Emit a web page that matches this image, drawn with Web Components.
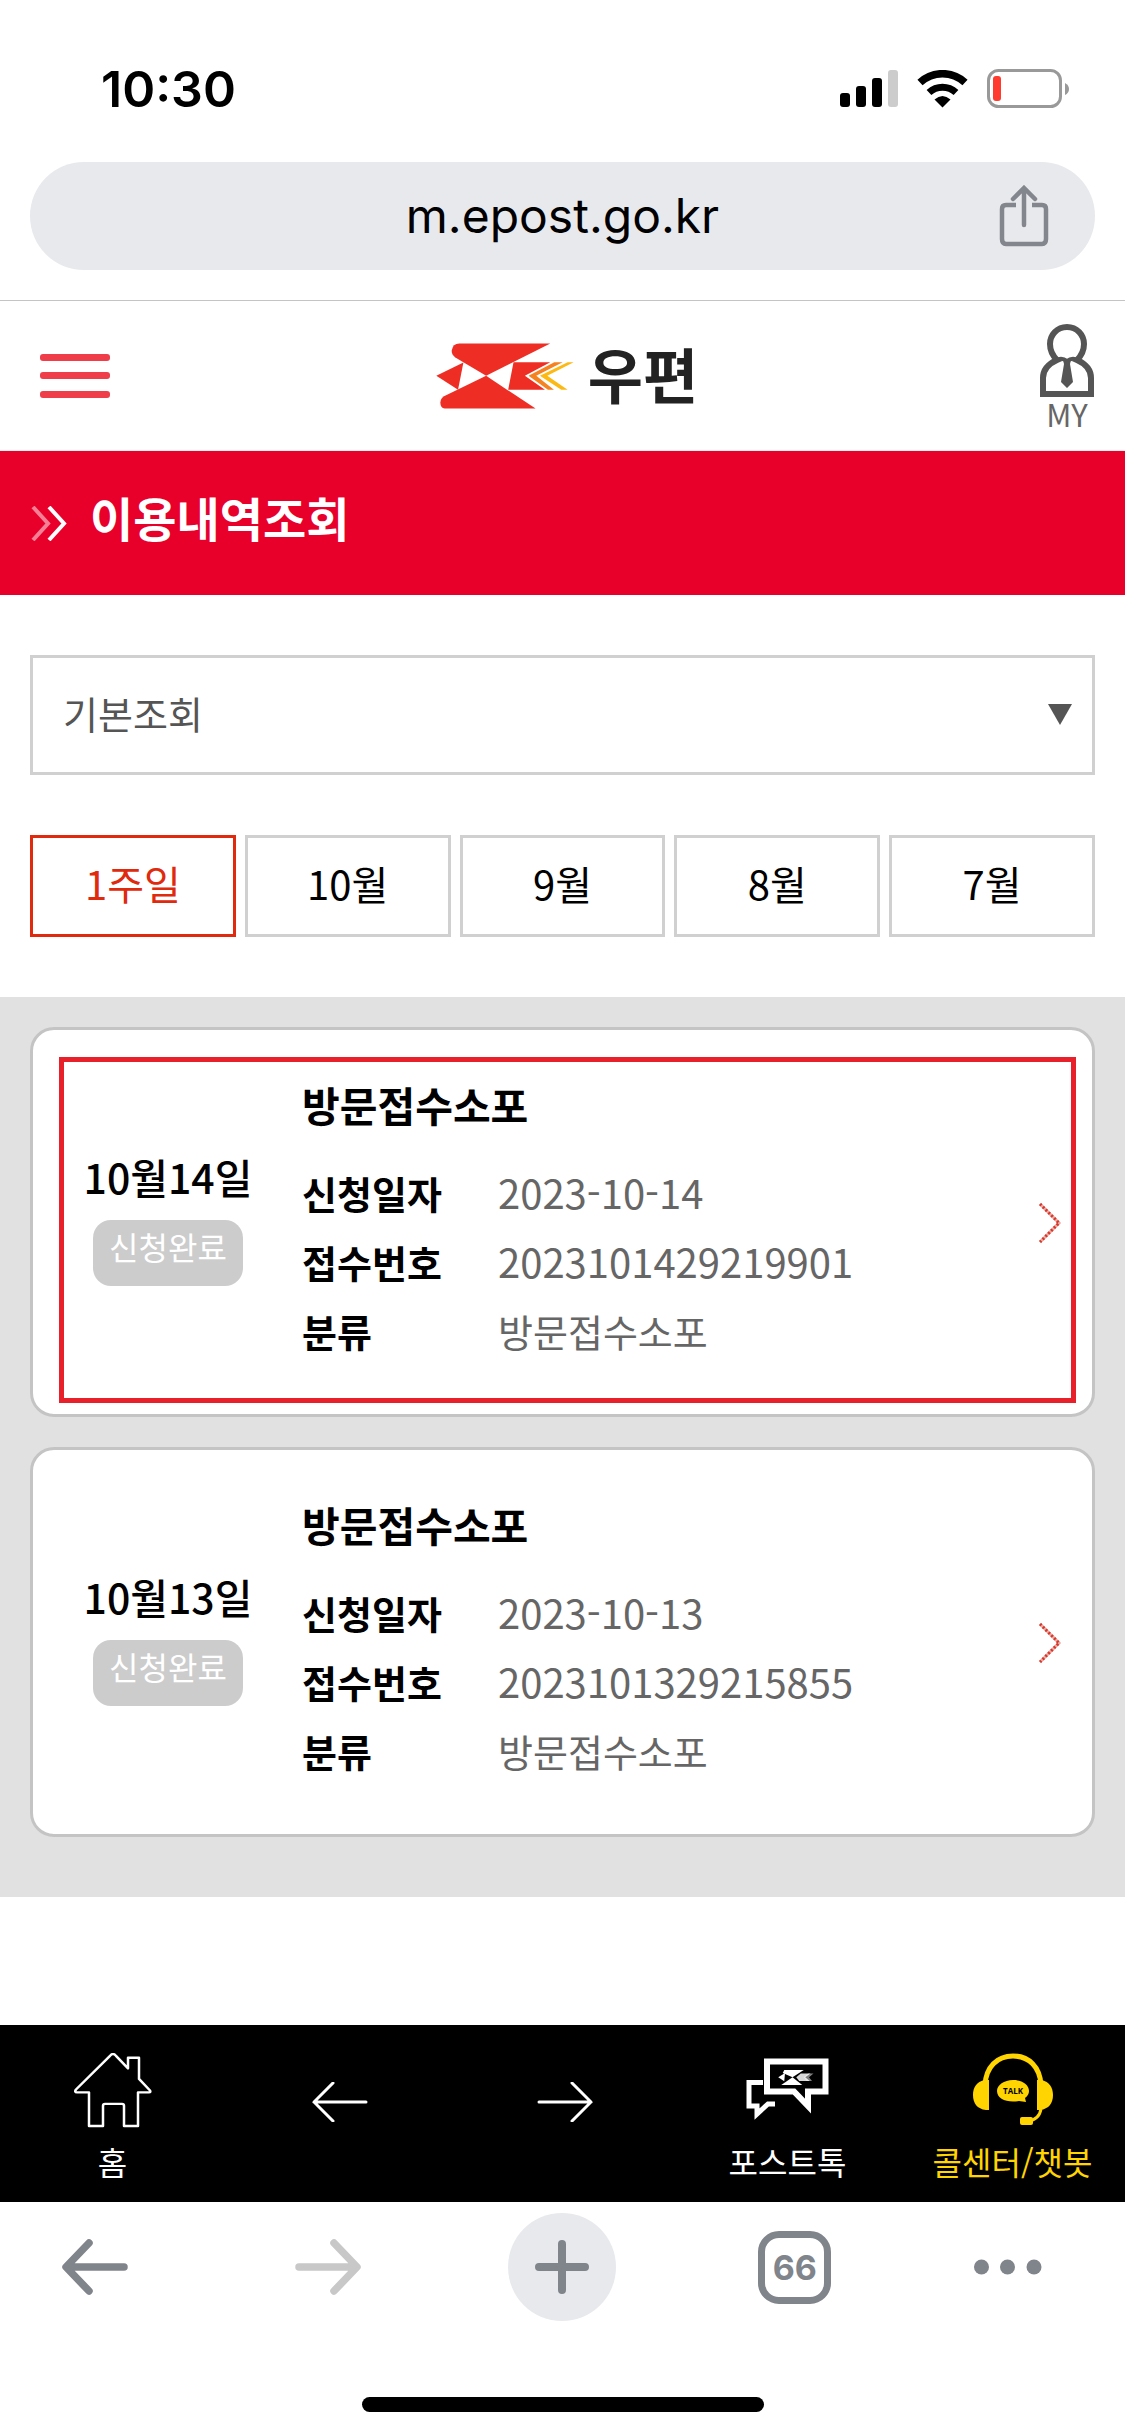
<!DOCTYPE html>
<html lang="ko">
<head>
<meta charset="utf-8">
<meta name="viewport" content="width=device-width, initial-scale=1">
<title>이용내역조회</title>
<style>
  html, body { margin: 0; background: #fff; }
  body { font-family: "Noto Sans CJK KR", "Noto Sans", sans-serif; color: #000; }
</style>
</head>
<body>
<epost-app></epost-app>
<script>
const base = `
  *, *::before, *::after { box-sizing: border-box; }
  button, select { font: inherit; color: inherit; background: none; border: 0; padding: 0; margin: 0; }
  a { color: inherit; text-decoration: none; }
  svg { display: block; flex: none; }
  h1, h2, p, dl, dd, dt, ul { margin: 0; padding: 0; font-weight: inherit; font-size: inherit; }
`;
function define(name, css, html) {
  const tpl = document.createElement('template');
  customElements.define(name, class extends HTMLElement {
    connectedCallback() {
      if (this.shadowRoot) return;
      tpl.innerHTML = `<style>${base}${css}</style>${typeof html === 'function' ? html(this) : html}`;
      this.attachShadow({ mode: 'open' }).append(tpl.content.cloneNode(true));
    }
  });
}

define('status-bar', `
  :host { display: flex; justify-content: space-between; align-items: center; height: 162px; padding: 16px 56px 0 101px; font: 600 50px/60px Inter, sans-serif; }
  .icons { display: flex; align-items: center; gap: 19px; }
`, `
  <time>10:30</time>
  <div class="icons">
    <svg width="58" height="38" viewBox="0 0 58 38" role="img" aria-label="신호">
      <rect x="0" y="23" width="10" height="14" rx="3"/><rect x="16" y="16" width="10" height="21" rx="3"/>
      <rect x="32" y="8" width="10" height="29" rx="3"/><rect x="48" y="0" width="10" height="37" rx="3" fill="#ccc"/>
    </svg>
    <svg width="51" height="38" viewBox="0 0 51 38" role="img" aria-label="와이파이">
      <path d="M3 14.500A33 33 0 0 1 48 14.500" fill="none" stroke="#000" stroke-width="7.500" transform="translate(0 -2)"/>
      <path d="M12 23.500A20 20 0 0 1 39 23.500" fill="none" stroke="#000" stroke-width="7" transform="translate(0 -1)"/>
      <path d="M25.500 37.500L17.500 29.500Q25.500 22.500 33.500 29.500Z"/>
    </svg>
    <svg width="82" height="40" viewBox="0 0 82 40" role="img" aria-label="배터리">
      <rect x="1.500" y="1.500" width="72" height="36" rx="10" fill="none" stroke="#999" stroke-width="3"/>
      <rect x="6" y="7" width="8" height="25" rx="3" fill="#ff3b30"/>
      <path d="M78 14Q82 16 82 20Q82 24 78 26Z" fill="#999"/>
    </svg>
  </div>
`);

define('address-bar', `
  :host { display: block; padding: 0 30px 30px; border-bottom: 1px solid #c4c4c6; }
  .pill { display: grid; grid-template-columns: 1fr auto 1fr; align-items: center; height: 108px; padding: 0 46px; border-radius: 54px; background: #e8e9ed; font: 400 48px/60px Inter, sans-serif; }
  button { justify-self: end; }
`, `
  <div class="pill">
    <span></span><span>m.epost.go.kr</span>
    <button aria-label="공유">
      <svg width="50" height="62" viewBox="0 0 50 62" fill="none" stroke="#83868c" stroke-width="4.500">
        <path d="M17 20H7Q3 20 3 24V54Q3 59 7 59H43Q47 59 47 54V24Q47 20 43 20H33"/>
        <path d="M25 40V4M14 14L25 3L36 14" stroke-linecap="round"/>
      </svg>
    </button>
  </div>
`);

define('site-header', `
  :host { display: grid; grid-template-columns: 1fr auto 1fr; align-items: center; height: 150px; padding: 0 31px 0 40px; border-bottom: 1px solid #eee; }
  .logo { display: flex; align-items: center; gap: 14px; font-weight: 700; font-size: 60px; line-height: 64px; color: #222; }
  .logo span { padding-bottom: 6px; }
  .my { justify-self: end; display: flex; flex-direction: column; align-items: center; padding-top: 4px; font-size: 31px; line-height: 34px; color: #666; }
`, `
  <button aria-label="메뉴"><svg width="70" height="44" viewBox="0 0 70 44" fill="#ef3e4a"><rect width="70" height="7" rx="3"/><rect y="18" width="70" height="7" rx="3"/><rect y="37" width="70" height="7" rx="3"/></svg></button>
  <a class="logo" href="#">
    <svg width="138" height="66" viewBox="30 38 413 197" aria-hidden="true">
      <g fill="#ee2e24">
        <path d="M100 39H372L180 136L88 81Q76 73 77 60Q80 39 100 39Z"/>
        <path d="M180 136L328 234H56Q43 232 43 216Q44 203 54 197Z"/>
        <path d="M31 136L112 96L96 178Z"/>
        <path d="M262 95H372L296 136L356 178H246Z"/>
      </g>
      <path d="M384 95H409L330 136L383 178H365L307 136Z" fill="#f58220"/>
      <path d="M424 95H442L363 136L424 178H405L341 136Z" fill="#fdb913"/>
    </svg>
    <span>우편</span>
  </a>
  <a class="my" href="#">
    <svg width="54" height="73" viewBox="0 0 54 73" aria-hidden="true">
      <path d="M27 3C17 3 10 11 10 20C10 27 13 32 17 36C8 40 3 46 3 54V70H51V54C51 46 46 40 37 36C41 32 44 27 44 20C44 11 37 3 27 3Z" fill="#fff" stroke="#555" stroke-width="6"/>
      <path d="M16 36Q22 33 27 37Q32 33 38 36" fill="none" stroke="#555" stroke-width="4"/>
      <path d="M23 36H31L30 40L33 58L27 64L21 58L24 40Z" fill="#555"/>
    </svg>
    <span>MY</span>
  </a>
`);

define('page-title', `
  :host { display: flex; align-items: center; gap: 23px; height: 144px; padding: 0 31px; background: #e8002b; color: #fff; }
  h1 { font-weight: 700; font-size: 47px; line-height: 60px; padding-bottom: 12px; }
`, `
  <svg width="36" height="35" viewBox="0 0 36 35" fill="none" stroke="#fff" stroke-width="4" aria-hidden="true"><path d="M2 1L17 17.500L2 34" opacity=".5"/><path d="M18 1L33 17.500L18 34"/></svg>
  <h1><slot></slot></h1>
`);

define('search-filter', `
  :host { display: block; padding: 60px 30px; }
  .box { display: grid; align-items: center; margin-bottom: 60px; }
  .box > * { grid-area: 1 / 1; }
  select { appearance: none; width: 100%; height: 120px; padding: 0 30px 6px; border: 3px solid #d0d0d0; border-radius: 0; font-size: 38px; color: #555; }
  svg { justify-self: end; margin: 0 23px 2px 0; pointer-events: none; }
  .tabs { display: grid; grid-template-columns: repeat(5, 1fr); gap: 9px; }
  .tabs button { height: 102px; padding-bottom: 6px; border: 3px solid #d0d0d0; font-size: 40px; line-height: 48px; }
  .tabs button[aria-pressed=true] { border-color: #df2a0d; color: #df2a0d; }
`, `
  <div class="box">
    <select aria-label="조회 구분"><option>기본조회</option></select>
    <svg width="24" height="21" viewBox="0 0 24 21" aria-hidden="true"><path d="M0 0H24L12 21Z" fill="#555"/></svg>
  </div>
  <div class="tabs">
    <button aria-pressed="true">1주일</button><button>10월</button><button>9월</button><button>8월</button><button>7월</button>
  </div>
`);

define('history-card', `
  :host { display: block; }
  a { position: relative; display: grid; grid-template-columns: 216px 1fr auto; column-gap: 26px; align-items: center; padding: 50px 30px 49px 27px; border: 3px solid #c4c4c4; border-radius: 24px; background: #fff; }
  .day { display: flex; flex-direction: column; align-items: center; gap: 20px; padding-bottom: 8px; font-weight: 500; font-size: 41px; line-height: 48px; }
  .state { height: 66px; padding: 0 16px; border-radius: 18px; background: #ccc; color: #fff; font-weight: 400; font-size: 32px; line-height: 52px; }
  h2 { font-weight: 700; font-size: 41px; line-height: 48px; margin-bottom: 30px; }
  dl { display: grid; grid-template-columns: 196px 1fr; font-size: 38px; line-height: 69px; }
  dt { font-weight: 700; }
  dd { color: #666; }
  .num { font-size: 40px; }
  :host([marked]) a::after { content: ""; position: absolute; inset: 27px 16px 11px 26px; border: 5px solid #e8202a; }
`, el => `
  <a href="#">
    <div class="day"><span>${el.getAttribute('day')}</span><span class="state">신청완료</span></div>
    <div>
      <h2>방문접수소포</h2>
      <dl>
        <dt>신청일자</dt><dd class="num">${el.getAttribute('date')}</dd>
        <dt>접수번호</dt><dd class="num">${el.getAttribute('number')}</dd>
        <dt>분류</dt><dd>방문접수소포</dd>
      </dl>
    </div>
    <svg width="23" height="40" viewBox="0 0 23 40" fill="none" aria-hidden="true"><path d="M1 1L20 20L1 39" stroke="#f0a79f" stroke-width="3"/><path d="M1 1L20 20L1 39" stroke="#d3382c" stroke-width="3" stroke-dasharray="2 2"/></svg>
  </a>
`);

define('history-list', `
  :host { display: flex; flex-direction: column; gap: 30px; padding: 30px 30px 60px; background: #e1e1e1; }
`, `<slot></slot>`);

define('site-nav', `
  nav { display: grid; grid-template-columns: repeat(5, 1fr); height: 177px; background: #000; color: #fff; font-size: 32px; line-height: 40px; }
  a { display: flex; flex-direction: column; align-items: center; gap: 12px; padding-top: 28px; white-space: nowrap; }
  .arrow { padding: 57px 0 0 5px; }
  .talk { color: #ffd400; }
`, `
  <nav>
    <a href="#"><svg width="78" height="76" viewBox="0 0 78 76" fill="none" stroke="#fff" stroke-width="2.500" stroke-linejoin="round"><path d="M36 3Q39 -1 42 3L54 16V5H65V27L76 39Q77 41 75 41H64V76H50V55Q50 53 48 53H31Q29 53 29 55V76H15V41H3Q0 41 2 38Z" transform="scale(1 .96)"/></svg><span>홈</span></a>
    <a class="arrow" href="#" aria-label="이전"><svg width="56" height="40" viewBox="0 0 56 40" fill="none" stroke="#fff" stroke-width="3" stroke-linecap="round"><path d="M54 20H2M21 1L2 20L21 39"/></svg></a>
    <a class="arrow" href="#" aria-label="다음"><svg width="56" height="40" viewBox="0 0 56 40" fill="none" stroke="#fff" stroke-width="3" stroke-linecap="round"><path d="M2 20H54M35 1L54 20L35 39"/></svg></a>
    <a href="#">
      <svg width="83" height="76" viewBox="0 0 83 76" fill="none" stroke="#fff">
        <path d="M21 8.500H79.500V38.500H62V53L48 38.500H21Z" stroke-width="6"/>
        <path d="M17 29.500H3V53H11V61L22 51H29" stroke-width="5"/>
        <g fill="#fff" stroke="none" transform="translate(33 14) scale(.075)">
          <path d="M70 39H330L180 136L50 81Z"/><path d="M180 136L310 240H30Z"/><path d="M-10 136L80 80L70 190Z"/><path d="M290 85H420L350 136L410 188H270L230 136Z" opacity=".85"/><path d="M390 85H460L400 136L440 188H370L330 136Z" opacity=".5"/>
        </g>
      </svg><span>포스트톡</span></a>
    <a class="talk" href="#">
      <svg width="82" height="76" viewBox="0 0 82 76" fill="#ffd400">
        <path d="M13 32C14 14 25 3 41 3S68 14 69 32" fill="none" stroke="#ffd400" stroke-width="5"/>
        <path d="M17 27V57H14C5 56 1 50 1 42S5 29 12 27ZM65 27V57H68C77 56 81 50 81 42S77 29 70 27Z"/>
        <path d="M69 56Q67 67 56 68" fill="none" stroke="#ffd400" stroke-width="3"/><rect x="48" y="64" width="13" height="8" rx="2"/>
        <path d="M41 27C51 27 57 32 57 38Q57 42 53 45L54 49L47 48C35 50 25 46 25 38C25 32 32 27 41 27Z"/>
        <text x="41" y="41" text-anchor="middle" font-family="Open Sans, sans-serif" font-weight="700" font-size="8" fill="#000">TALK</text>
      </svg><span>콜센터/챗봇</span></a>
  </nav>
`);

define('browser-toolbar', `
  :host { display: flex; flex-direction: column; align-items: center; height: 234px; color: #80848b; }
  .row { align-self: stretch; display: flex; justify-content: space-between; padding: 11px 43px 0 41px; }
  button { width: 108px; height: 108px; display: flex; align-items: center; justify-content: center; }
  .new { border-radius: 54px; background: #e8e9ed; }
  .more { justify-content: flex-start; }
  .count { width: 73px; height: 73px; border: 7px solid currentColor; border-radius: 21px; font: 700 34px/60px Inter, sans-serif; text-align: center; }
  .home { width: 402px; height: 15px; margin-top: 76px; border-radius: 8px; background: #000; }
`, `
  <div class="row">
    <button aria-label="뒤로"><svg width="66" height="56" viewBox="0 0 66 56" fill="none" stroke="currentColor" stroke-width="7.500" stroke-linecap="round" stroke-linejoin="round"><path d="M62 28H5M27 4L4 28L27 52"/></svg></button>
    <button aria-label="앞으로" disabled><svg width="66" height="56" viewBox="0 0 66 56" fill="none" stroke="#c8c8c8" stroke-width="7.500" stroke-linecap="round" stroke-linejoin="round"><path d="M4 28H61M39 4L62 28L39 52"/></svg></button>
    <button class="new" aria-label="새 탭"><svg width="54" height="54" viewBox="0 0 54 54" stroke="currentColor" stroke-width="8" stroke-linecap="round"><path d="M27 4V50M4 27H50"/></svg></button>
    <button aria-label="탭 목록"><span class="count">66</span></button>
    <button class="more" aria-label="더보기"><svg width="68" height="16" viewBox="0 0 68 16" fill="currentColor"><circle cx="7.500" cy="8" r="7.500"/><circle cx="33.500" cy="8" r="7.500"/><circle cx="60" cy="8" r="7.500"/></svg></button>
  </div>
  <div class="home"></div>
`);

define('epost-app', `
  :host { display: flex; flex-direction: column; min-height: 100vh; }
  main { flex: 1; }
`, `
  <status-bar></status-bar>
  <address-bar></address-bar>
  <site-header></site-header>
  <main>
    <page-title>이용내역조회</page-title>
    <search-filter></search-filter>
    <history-list>
      <history-card marked day="10월14일" date="2023-10-14" number="2023101429219901"></history-card>
      <history-card day="10월13일" date="2023-10-13" number="2023101329215855"></history-card>
    </history-list>
  </main>
  <site-nav></site-nav>
  <browser-toolbar></browser-toolbar>
`);
</script>
</body>
</html>
